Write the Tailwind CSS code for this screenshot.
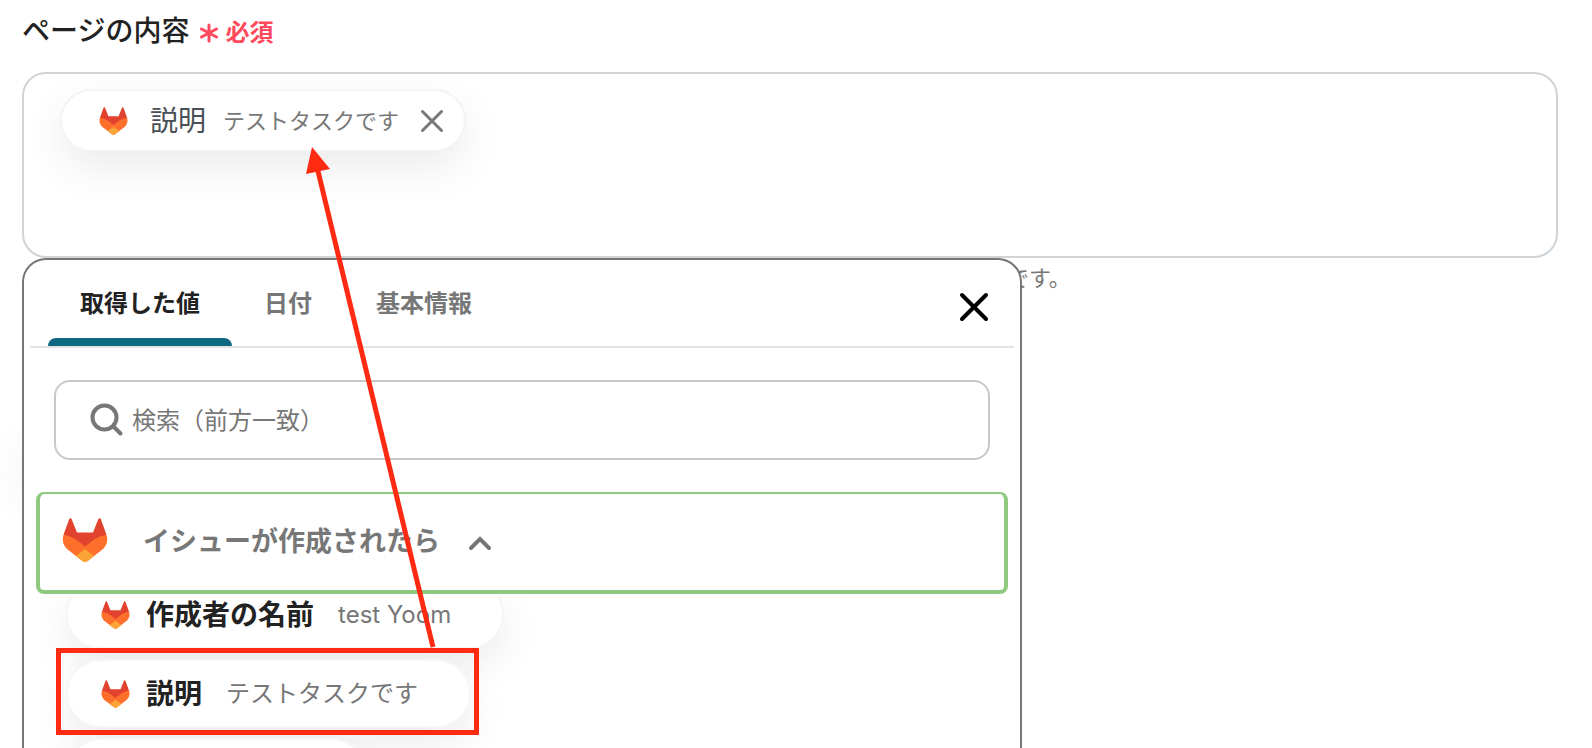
<!DOCTYPE html>
<html lang="ja">
<head>
  <meta charset="UTF-8" />
  <title>ページの内容</title>
  <meta name="viewport" content="width=device-width, initial-scale=1.0">
  <script src="https://cdn.jsdelivr.net/npm/@tailwindcss/browser@4"></script>
</head>
<body class="bg-white text-[#222] font-['Inter','Noto_Sans_CJK_JP',sans-serif]">

  <svg class="hidden">
    <symbol id="gitlab" viewBox="0 0 46 44">
      <path fill="#e2432e" d="M7.2.9c.5-1 1.900-1 2.400.1L15 14.500h16L36.400 1c.5-1.100 1.900-1.100 2.400-.1l5.600 15.500L37 26 23 34 9 26 1.600 16.400z" />
      <path fill="#ff6f2c" d="M1.600 16.400C8 17.500 13.500 20.500 18 24.500l5 4 5-4c4.500-4 10-7 16.400-8.100 1.800 5 .8 10.800-3.400 14.600L26 42.800c-1.800 1.400-4.200 1.400-6 0L5 31C.8 27.200-.2 21.400 1.600 16.400z" />
      <path fill="#e2432e" d="M1.600 16.400C10 18 16 21.500 23 27.800 30 21.500 36 18 44.400 16.400z" />
      <path fill="#fca436" d="M23 31.200l9.200 6.800-6.800 5.200c-1.500 1.100-3.300 1.100-4.800 0L13.800 38z" />
    </symbol>
  </svg>

  <main class="relative h-screen overflow-hidden pt-2 pl-[22px] pr-[34px]">

    <!-- 見出し -->
    <div class="flex h-16 items-start gap-2 pt-[2px]">
      <h1 id="contentLabel" class="text-[28px] leading-[42px] font-medium">ページの内容</h1>
      <p class="flex items-center gap-1 text-2xl leading-[46px] font-bold text-[#ff4a5c]">
        <svg class="size-6" viewBox="0 0 24 24" fill="none" stroke="currentColor" stroke-width="3" stroke-linecap="round"><path d="M12 4v16M4.500 8l15 8M19.500 8l-15 8" /></svg>
        必須
      </p>
    </div>

    <!-- 入力欄 -->
    <div role="group" aria-labelledby="contentLabel" class="h-[186px] rounded-3xl border-2 border-[#cfd4d9] pt-[15px] pl-9">
      <div class="flex h-[63px] w-fit items-center rounded-full border-2 border-[#f4f4f4] bg-white bg-clip-padding pr-5 pl-[37px] shadow-[0_16px_40px_rgba(0,0,0,0.08)]">
        <svg class="h-7 w-[29px]"><use href="#gitlab" /></svg>
        <span class="ml-[22px] text-[28px] leading-10 text-[#495057]">説明</span>
        <span class="ml-[17px] text-[22px] leading-8 text-[#777]">テストタスクです</span>
        <button aria-label="削除" class="ml-[21px] text-[#777]">
          <svg class="size-6" viewBox="0 0 24 24" fill="none" stroke="currentColor" stroke-width="3" stroke-linecap="round"><path d="M2.500 2.500l19 19M21.500 2.500l-19 19" /></svg>
        </button>
      </div>
    </div>
    <p class="pt-1 pl-[985px] text-[22px] leading-8 text-[#777]">です。</p>

    <!-- メニューの後ろに落ちる影 -->
    <div class="absolute top-[450px] left-8 h-12 w-24 rounded-full shadow-[0_0_48px_rgba(20,60,50,0.16)]"></div>

    <!-- 値の選択メニュー -->
    <section class="absolute top-[258px] bottom-0 left-[22px] w-[1000px] rounded-t-3xl border-2 border-b-0 border-[#777] bg-white">
      <div class="mx-[6px] flex h-[88px] items-end justify-between border-b-2 border-[#e3e3e3] pr-6 pl-[18px]">
        <nav class="flex text-2xl font-bold text-[#777]">
          <button class="flex h-[70px] flex-col items-center justify-between text-[#222]">
            <span class="px-8 leading-[56px]">取得した値</span>
            <span class="h-2 w-full rounded-t-lg bg-[#0f6980]"></span>
          </button>
          <button class="h-[70px] px-8 pb-[14px] leading-[56px]">日付</button>
          <button class="h-[70px] px-8 pb-[14px] leading-[56px]">基本情報</button>
        </nav>
        <button aria-label="閉じる" class="mb-[23px] text-black">
          <svg class="size-8" viewBox="0 0 32 32" fill="none" stroke="currentColor" stroke-width="4" stroke-linecap="round"><path d="M4 4l24 24M28 4L4 28" /></svg>
        </button>
      </div>

      <label class="mx-[30px] mt-8 flex h-20 items-center rounded-2xl border-2 border-[#c8c8c8] pl-[33px] text-[#777]">
        <svg class="mr-[7px] size-9" viewBox="0 0 36 36" fill="none" stroke="currentColor" stroke-width="4" stroke-linecap="round"><circle cx="15.500" cy="15.500" r="12" /><path d="M24.500 24.500l7 7" /></svg>
        <input type="text" aria-label="検索" placeholder="検索（前方一致）" class="h-10 flex-1 text-2xl outline-none placeholder:text-[#777]">
      </label>

      <button class="mx-3 mt-8 flex h-[102px] w-[972px] items-center rounded-lg border-4 border-t-2 border-[#8fc97d] pb-1 pl-[22px] text-[#777]">
        <svg class="h-11 w-[46px]"><use href="#gitlab" /></svg>
        <span class="ml-[35px] pt-1 text-[27px] leading-10 font-bold">イシューが作成されたら</span>
        <svg class="mt-[6px] ml-[26px] size-7" viewBox="0 0 28 28" fill="none" stroke="currentColor" stroke-width="4" stroke-linecap="round"><path d="M5 19l9-9 9 9" /></svg>
      </button>

      <!-- 値の一覧 -->
      <div class="mt-[2px] overflow-hidden pl-[42px]">
        <ul class="-mt-4 flex flex-col items-start gap-[10px]">
          <li class="flex h-[69px] items-center rounded-full border-2 border-[#f6f6f6] bg-white bg-clip-padding pr-[51px] pl-[33px] shadow-[0_16px_40px_rgba(0,0,0,0.08)]">
            <svg class="mr-4 h-7 w-[29px]"><use href="#gitlab" /></svg>
            <span class="text-[28px] leading-10 font-bold">作成者の名前</span>
            <span class="ml-6 text-2xl leading-9 text-[#777]">test Yoom</span>
          </li>
          <li class="flex h-[69px] items-center rounded-full border-2 border-[#f6f6f6] bg-white bg-clip-padding pr-[51px] pl-[33px] shadow-[0_16px_40px_rgba(0,0,0,0.08)]">
            <svg class="mr-4 h-7 w-[29px]"><use href="#gitlab" /></svg>
            <span class="text-[28px] leading-10 font-bold">説明</span>
            <span class="ml-6 text-2xl leading-9 text-[#777]">テストタスクです</span>
          </li>
          <li class="h-[69px] w-[300px] rounded-full border-2 border-[#f6f6f6] bg-white bg-clip-padding shadow-[0_16px_40px_rgba(0,0,0,0.08)]"></li>
        </ul>
      </div>
    </section>

    <!-- 注釈：枠と矢印 -->
    <div class="pointer-events-none absolute top-[648px] left-14 h-[87px] w-[423px] border-5 border-[#ff2a12]"></div>
    <svg class="pointer-events-none absolute top-[147px] left-[300px] h-[502px] w-36" viewBox="0 0 144 502">
      <path fill="none" stroke="#ff2a12" stroke-width="5" d="M17 20l116 480" />
      <path fill="#ff2a12" d="M12 0l18 22-24 5z" />
    </svg>
  </main>

</body>
</html>
